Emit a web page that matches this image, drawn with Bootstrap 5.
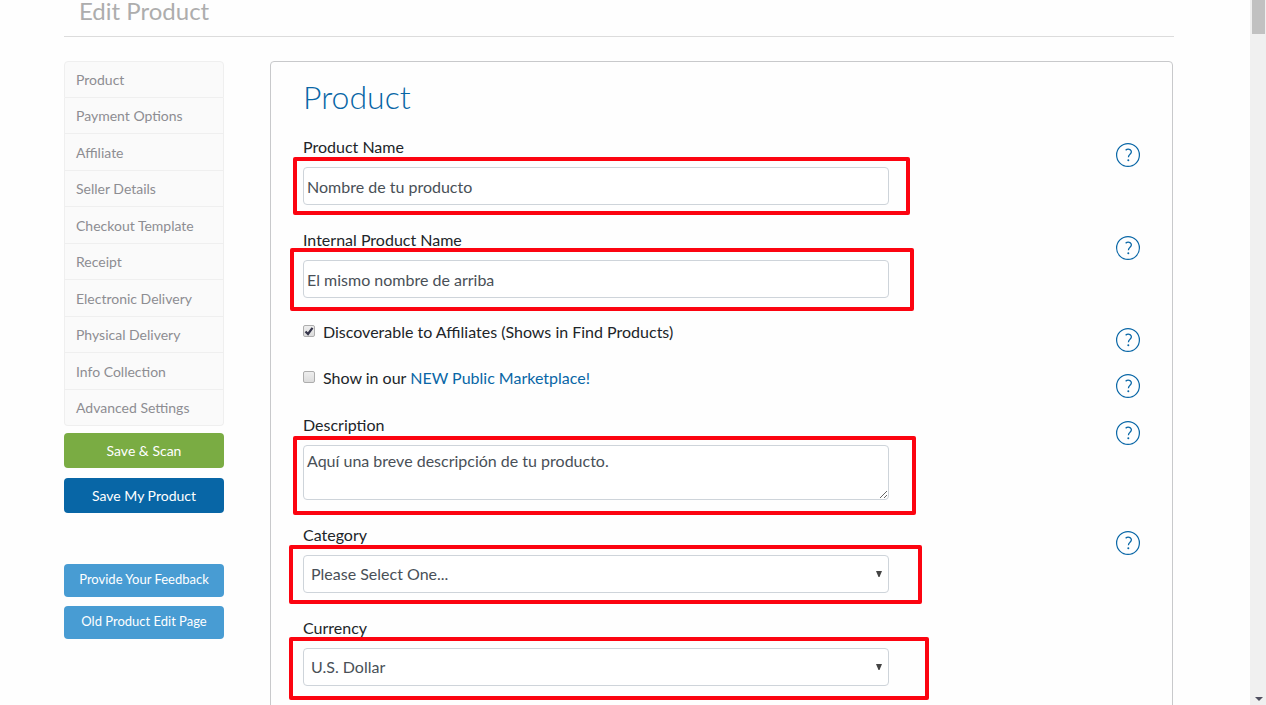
<!DOCTYPE html>
<html lang="en">
<head>
<meta charset="utf-8">
<meta name="viewport" content="width=device-width, initial-scale=1">
<title>Edit Product</title>
<link href="https://cdn.jsdelivr.net/npm/bootstrap@5.3.0/dist/css/bootstrap.min.css" rel="stylesheet">
<style>
  body { font-family: Lato, "Open Sans", sans-serif; font-size: 16px; line-height: 24px; color: #212529; background: #fefefe; }
  a { color: #0866a6; text-decoration: none; }
  .page-main { padding: 0 76px 0 64px; min-width: 0; }
  .page-title { font-size: 24px; line-height: 22px; font-weight: 400; color: #adadad; padding: 0 15px 14px; margin: 0 0 24px; border-bottom: 1px solid #dcdcdc; }
  .side { width: 160px; flex: none; margin-right: 46px; font-size: 14px; }
  .side-menu { display: grid; grid-template-rows: repeat(10, 1fr); height: 365px; --bs-list-group-border-color: #efefef; --bs-list-group-bg: #fafafa; }
  .side-menu .list-group-item { display: flex; align-items: center; padding: 2px 11px 0; color: #8d8d92; border-radius: 0; }
  .side-menu .list-group-item:first-child { border-radius: 4px 4px 0 0; }
  .side-menu .list-group-item:last-child { border-radius: 0 0 4px 4px; }
  .side .btn { font-size: 14px; line-height: 21px; border: 0; border-radius: 4px; color: #fff; padding: 7px 0; }
  .side .btn-scan { background: #7aac43; margin-top: 7px; }
  .side .btn-save { background: #0866a6; margin-top: 10px; }
  .side .btn-more { background: #489cd3; padding: 5px 0 7px; font-size: 13px; }
  .more-actions { gap: 9px; margin-top: 51px; }
  .panel { border: 1px solid #c8c9cb; border-radius: 4px; padding: 16px 32px; margin-right: 1px; min-width: 0; min-height: calc(100vh - 50px); }
  .panel h2 { font-size: 32px; line-height: 38px; font-weight: 300; color: #0866a6; margin: 0 0 19px; }
  .entry { display: flex; justify-content: space-between; align-items: flex-start; margin-bottom: 23px; }
  .entry-body { width: 70%; }
  .entry-body > label { display: block; margin-bottom: 8px; }
  .entry .form-control, .entry .form-select { display: block; height: 38px; padding: 6px 3px; border-color: #ced4da; border-radius: 4px; color: #495057; line-height: 24px; background-color: #fff; }
  .entry textarea.form-control { height: 55px; min-height: 0; padding-top: 3px; }
  .entry .form-select { padding: 6px 28px 6px 7px; background-position: right 6px center; background-size: 6px 6px;
    background-image: url("data:image/svg+xml,%3Csvg xmlns='http://www.w3.org/2000/svg' viewBox='0 0 6 6'%3E%3Cpath d='M0 0h6L3.5 6h-1z' fill='%23444'/%3E%3C/svg%3E"); }
  .tick-row { display: flex; gap: 8px; line-height: 21px; min-height: 23px; }
  .tick-row input { appearance: none; flex: none; width: 12px; height: 12px; margin: 4px 0 0; border: 1px solid #adadad; border-radius: 2px; background: linear-gradient(#eee, #dcdcdc); }
  .tick-row input:checked { background: url("data:image/svg+xml,%3Csvg xmlns='http://www.w3.org/2000/svg' viewBox='0 0 10 10'%3E%3Cpath d='M1.5 5.5 4 8 8.5 1.8' fill='none' stroke='%2335354a' stroke-width='2.2'/%3E%3C/svg%3E") center / 10px 10px no-repeat, linear-gradient(#eee, #dcdcdc); }
  .help { width: 24px; height: 24px; padding: 0; border: 0; background: none; margin: 8px 0 -9px; flex: none; }
  .tick-entry .help { margin-top: 7px; }
  .help svg { display: block; }
  .marker { position: absolute; border: 4px solid #fc0410; border-radius: 2px; pointer-events: none; }
  .marker-name { inset: -10px -21px -10px -10px; }
  .marker-internal { inset: -12px -25px -13px -13px; }
  .marker-desc { inset: -9px -27px -15px -10px; }
  .marker-cat { inset: -10px -33px -11px -14px; }
  .marker-cur { inset: -11px -40px -14px -14px; }
  .scroll-rail { width: 16px; flex: none; background: #f0f0f0; padding: 0 1px 0 2px; }
  .scroll-thumb { height: 34px; background: #c1c1c1; }
</style>
</head>
<body>
<svg class="d-none" aria-hidden="true">
  <symbol id="question" viewBox="0 0 24 24">
    <circle cx="12" cy="12" r="11.4" fill="none" stroke="#0866a6" stroke-width="1.2"/>
    <path d="M9.6 7.3C10.8 6.2 13 6 14.4 6.9c1.3 1 1.2 2.8.1 3.9-1.1 1.1-2 1.4-2.1 3.5" fill="none" stroke="#0866a6" stroke-width="1.3"/>
    <circle cx="12.3" cy="17.2" r="1" fill="#0866a6"/>
  </symbol>
</svg>
<div class="d-flex vh-100 overflow-hidden">
  <main class="page-main flex-grow-1">
    <h1 class="page-title">Edit Product</h1>
    <div class="d-flex align-items-start">
      <aside class="side">
        <nav class="list-group side-menu">
          <a class="list-group-item" href="#product">Product</a>
          <a class="list-group-item" href="#payment">Payment Options</a>
          <a class="list-group-item" href="#affiliate">Affiliate</a>
          <a class="list-group-item" href="#seller">Seller Details</a>
          <a class="list-group-item" href="#checkout">Checkout Template</a>
          <a class="list-group-item" href="#receipt">Receipt</a>
          <a class="list-group-item" href="#electronic">Electronic Delivery</a>
          <a class="list-group-item" href="#physical">Physical Delivery</a>
          <a class="list-group-item" href="#info">Info Collection</a>
          <a class="list-group-item" href="#advanced">Advanced Settings</a>
        </nav>
        <button type="button" class="btn btn-scan w-100">Save &amp; Scan</button>
        <button type="submit" form="product" class="btn btn-save w-100">Save My Product</button>
        <div class="d-grid more-actions">
          <button type="button" class="btn btn-more">Provide Your Feedback</button>
          <button type="button" class="btn btn-more">Old Product Edit Page</button>
        </div>
      </aside>
      <form class="panel flex-grow-1" id="product">
        <h2>Product</h2>
        <div class="entry">
          <div class="entry-body">
            <label for="name">Product Name</label>
            <div class="position-relative"><input class="form-control" id="name" type="text" value="Nombre de tu producto"><span class="marker marker-name"></span></div>
          </div>
          <button type="button" class="help" aria-label="Help"><svg width="24" height="24"><use href="#question"/></svg></button>
        </div>
        <div class="entry">
          <div class="entry-body">
            <label for="internal">Internal Product Name</label>
            <div class="position-relative"><input class="form-control" id="internal" type="text" value="El mismo nombre de arriba"><span class="marker marker-internal"></span></div>
          </div>
          <button type="button" class="help" aria-label="Help"><svg width="24" height="24"><use href="#question"/></svg></button>
        </div>
        <div class="entry tick-entry">
          <div class="entry-body">
            <div class="tick-row"><input type="checkbox" id="discover" checked><label for="discover">Discoverable to Affiliates (Shows in Find Products)</label></div>
          </div>
          <button type="button" class="help" aria-label="Help"><svg width="24" height="24"><use href="#question"/></svg></button>
        </div>
        <div class="entry tick-entry">
          <div class="entry-body">
            <div class="tick-row"><input type="checkbox" id="market"><label for="market">Show in our <a href="#marketplace">NEW Public Marketplace!</a></label></div>
          </div>
          <button type="button" class="help" aria-label="Help"><svg width="24" height="24"><use href="#question"/></svg></button>
        </div>
        <div class="entry">
          <div class="entry-body">
            <label for="description">Description</label>
            <div class="position-relative"><textarea class="form-control" id="description">Aquí una breve descripción de tu producto.</textarea><span class="marker marker-desc"></span></div>
          </div>
          <button type="button" class="help" aria-label="Help"><svg width="24" height="24"><use href="#question"/></svg></button>
        </div>
        <div class="entry">
          <div class="entry-body">
            <label for="category">Category</label>
            <div class="position-relative"><select class="form-select" id="category"><option>Please Select One...</option></select><span class="marker marker-cat"></span></div>
          </div>
          <button type="button" class="help" aria-label="Help"><svg width="24" height="24"><use href="#question"/></svg></button>
        </div>
        <div class="entry">
          <div class="entry-body">
            <label for="currency">Currency</label>
            <div class="position-relative"><select class="form-select" id="currency"><option>U.S. Dollar</option></select><span class="marker marker-cur"></span></div>
          </div>
        </div>
      </form>
    </div>
  </main>
  <div class="scroll-rail d-flex flex-column justify-content-between" aria-hidden="true">
    <div class="scroll-thumb"></div>
    <svg class="align-self-center mb-1" width="8" height="4"><path d="M0 0h8L4 4z" fill="#505060"/></svg>
  </div>
</div>
<script src="https://cdn.jsdelivr.net/npm/bootstrap@5.3.0/dist/js/bootstrap.bundle.min.js"></script>
</body>
</html>
